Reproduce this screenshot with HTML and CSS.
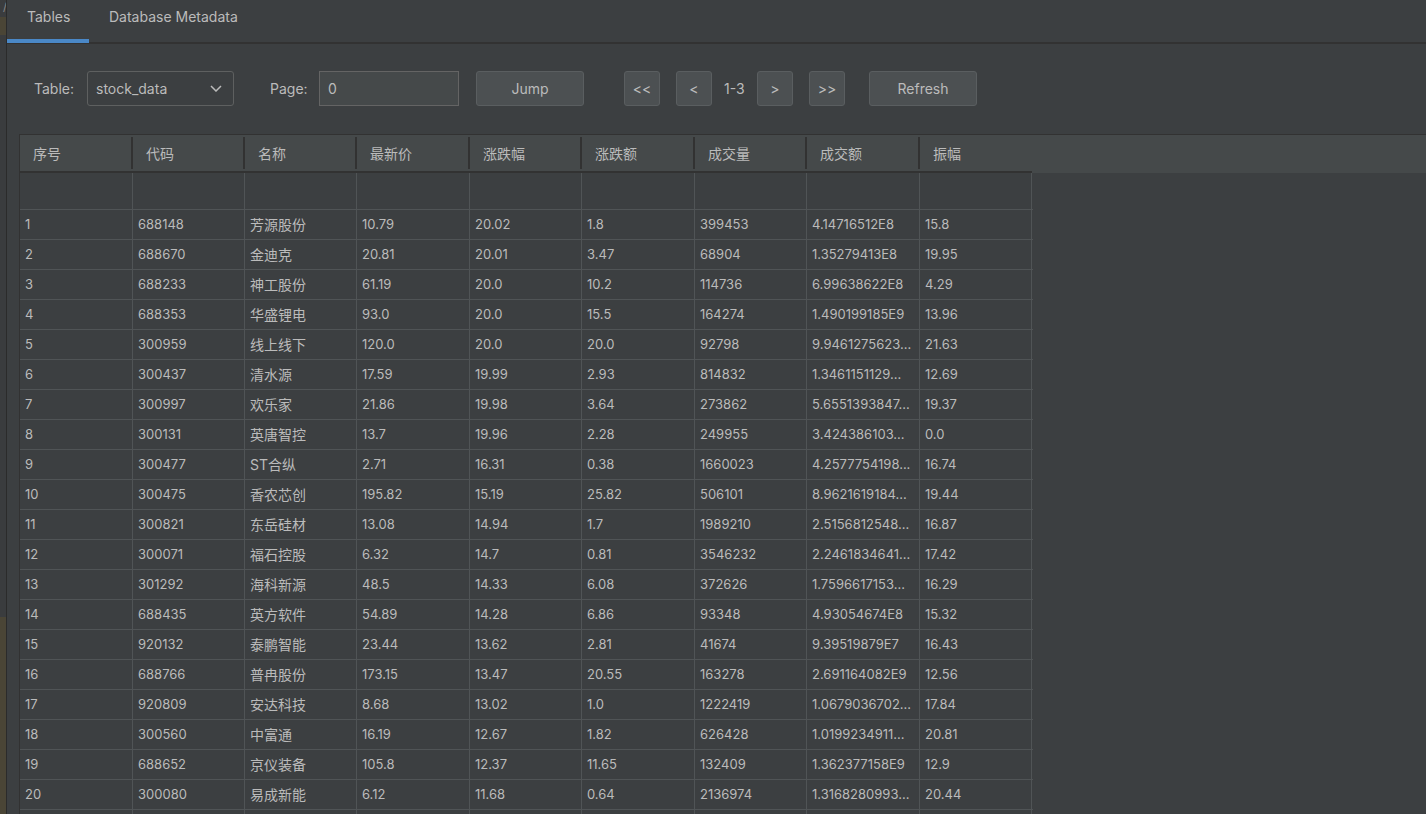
FILE: index.html
```html
<!DOCTYPE html>
<html lang="zh">
<head>
<meta charset="utf-8">
<title>Tables</title>
<link rel="stylesheet" href="styles.css">
</head>
<body>
<div class="gutter">
  <div class="g-top"><span class="g-slash">/</span></div>
  <div class="g-olive g-olive-a"></div>
  <div class="g-mid"></div>
  <div class="g-olive g-olive-b"></div>
</div>
<div class="divider"></div>
<div class="main">
  <div class="tabs">
    <div class="tab active">Tables</div>
    <div class="tab">Database Metadata</div>
  </div>
  <div class="toolbar">
    <span class="label label-table">Table:</span>
    <div class="combo">
      <span>stock_data</span>
      <svg class="chev" width="12" height="7" viewBox="0 0 12 7"><polyline points="1,1 6,6 11,1" fill="none" stroke="#bbbbbb" stroke-width="1.5"/></svg>
    </div>
    <span class="label label-page">Page:</span>
    <div class="input">0</div>
    <div class="btn btn-wide btn-jump">Jump</div>
    <div class="btn btn-sm btn-first">&lt;&lt;</div>
    <div class="btn btn-sm btn-prev">&lt;</div>
    <span class="pages">1-3</span>
    <div class="btn btn-sm btn-next">&gt;</div>
    <div class="btn btn-sm btn-last">&gt;&gt;</div>
    <div class="btn btn-wide btn-refresh">Refresh</div>
  </div>
  <div class="table-wrap">
    <div class="head">
      <div class="hrow">
        <div class="hc">序号</div><div class="hc">代码</div><div class="hc">名称</div><div class="hc">最新价</div><div class="hc">涨跌幅</div><div class="hc">涨跌额</div><div class="hc">成交量</div><div class="hc">成交额</div><div class="hc last">振幅</div>
      </div>
    </div>
    <div class="body" id="tbody">
      <div class="row empty"><div class="c"></div><div class="c"></div><div class="c"></div><div class="c"></div><div class="c"></div><div class="c"></div><div class="c"></div><div class="c"></div><div class="c"></div></div>
      <div class="row"><div class="c">1</div><div class="c">688148</div><div class="c cn">芳源股份</div><div class="c">10.79</div><div class="c">20.02</div><div class="c">1.8</div><div class="c">399453</div><div class="c">4.14716512E8</div><div class="c">15.8</div></div>
      <div class="row"><div class="c">2</div><div class="c">688670</div><div class="c cn">金迪克</div><div class="c">20.81</div><div class="c">20.01</div><div class="c">3.47</div><div class="c">68904</div><div class="c">1.35279413E8</div><div class="c">19.95</div></div>
      <div class="row"><div class="c">3</div><div class="c">688233</div><div class="c cn">神工股份</div><div class="c">61.19</div><div class="c">20.0</div><div class="c">10.2</div><div class="c">114736</div><div class="c">6.99638622E8</div><div class="c">4.29</div></div>
      <div class="row"><div class="c">4</div><div class="c">688353</div><div class="c cn">华盛锂电</div><div class="c">93.0</div><div class="c">20.0</div><div class="c">15.5</div><div class="c">164274</div><div class="c">1.490199185E9</div><div class="c">13.96</div></div>
      <div class="row"><div class="c">5</div><div class="c">300959</div><div class="c cn">线上线下</div><div class="c">120.0</div><div class="c">20.0</div><div class="c">20.0</div><div class="c">92798</div><div class="c">9.9461275623...</div><div class="c">21.63</div></div>
      <div class="row"><div class="c">6</div><div class="c">300437</div><div class="c cn">清水源</div><div class="c">17.59</div><div class="c">19.99</div><div class="c">2.93</div><div class="c">814832</div><div class="c">1.3461151129...</div><div class="c">12.69</div></div>
      <div class="row"><div class="c">7</div><div class="c">300997</div><div class="c cn">欢乐家</div><div class="c">21.86</div><div class="c">19.98</div><div class="c">3.64</div><div class="c">273862</div><div class="c">5.6551393847...</div><div class="c">19.37</div></div>
      <div class="row"><div class="c">8</div><div class="c">300131</div><div class="c cn">英唐智控</div><div class="c">13.7</div><div class="c">19.96</div><div class="c">2.28</div><div class="c">249955</div><div class="c">3.424386103...</div><div class="c">0.0</div></div>
      <div class="row"><div class="c">9</div><div class="c">300477</div><div class="c cn">ST合纵</div><div class="c">2.71</div><div class="c">16.31</div><div class="c">0.38</div><div class="c">1660023</div><div class="c">4.2577754198...</div><div class="c">16.74</div></div>
      <div class="row"><div class="c">10</div><div class="c">300475</div><div class="c cn">香农芯创</div><div class="c">195.82</div><div class="c">15.19</div><div class="c">25.82</div><div class="c">506101</div><div class="c">8.9621619184...</div><div class="c">19.44</div></div>
      <div class="row"><div class="c">11</div><div class="c">300821</div><div class="c cn">东岳硅材</div><div class="c">13.08</div><div class="c">14.94</div><div class="c">1.7</div><div class="c">1989210</div><div class="c">2.5156812548...</div><div class="c">16.87</div></div>
      <div class="row"><div class="c">12</div><div class="c">300071</div><div class="c cn">福石控股</div><div class="c">6.32</div><div class="c">14.7</div><div class="c">0.81</div><div class="c">3546232</div><div class="c">2.2461834641...</div><div class="c">17.42</div></div>
      <div class="row"><div class="c">13</div><div class="c">301292</div><div class="c cn">海科新源</div><div class="c">48.5</div><div class="c">14.33</div><div class="c">6.08</div><div class="c">372626</div><div class="c">1.7596617153...</div><div class="c">16.29</div></div>
      <div class="row"><div class="c">14</div><div class="c">688435</div><div class="c cn">英方软件</div><div class="c">54.89</div><div class="c">14.28</div><div class="c">6.86</div><div class="c">93348</div><div class="c">4.93054674E8</div><div class="c">15.32</div></div>
      <div class="row"><div class="c">15</div><div class="c">920132</div><div class="c cn">泰鹏智能</div><div class="c">23.44</div><div class="c">13.62</div><div class="c">2.81</div><div class="c">41674</div><div class="c">9.39519879E7</div><div class="c">16.43</div></div>
      <div class="row"><div class="c">16</div><div class="c">688766</div><div class="c cn">普冉股份</div><div class="c">173.15</div><div class="c">13.47</div><div class="c">20.55</div><div class="c">163278</div><div class="c">2.691164082E9</div><div class="c">12.56</div></div>
      <div class="row"><div class="c">17</div><div class="c">920809</div><div class="c cn">安达科技</div><div class="c">8.68</div><div class="c">13.02</div><div class="c">1.0</div><div class="c">1222419</div><div class="c">1.0679036702...</div><div class="c">17.84</div></div>
      <div class="row"><div class="c">18</div><div class="c">300560</div><div class="c cn">中富通</div><div class="c">16.19</div><div class="c">12.67</div><div class="c">1.82</div><div class="c">626428</div><div class="c">1.0199234911...</div><div class="c">20.81</div></div>
      <div class="row"><div class="c">19</div><div class="c">688652</div><div class="c cn">京仪装备</div><div class="c">105.8</div><div class="c">12.37</div><div class="c">11.65</div><div class="c">132409</div><div class="c">1.362377158E9</div><div class="c">12.9</div></div>
      <div class="row"><div class="c">20</div><div class="c">300080</div><div class="c cn">易成新能</div><div class="c">6.12</div><div class="c">11.68</div><div class="c">0.64</div><div class="c">2136974</div><div class="c">1.3168280993...</div><div class="c">20.44</div></div>
      <div class="row"><div class="c"></div><div class="c"></div><div class="c"></div><div class="c"></div><div class="c"></div><div class="c"></div><div class="c"></div><div class="c"></div><div class="c"></div></div>
    </div>
  </div>
</div>
</body>
</html>
```

FILE: styles.css
```css
* { box-sizing: border-box; }
html, body { margin: 0; padding: 0; }
body {
  width: 1426px;
  height: 814px;
  overflow: hidden;
  display: flex;
  background: #3c3f41;
  color: #bbbbbb;
  font-family: Inter, "Noto Sans", "Noto Sans CJK SC", sans-serif;
  font-size: 13px;
}

/* left gutter */
.gutter {
  width: 6px;
  display: flex;
  flex-direction: column;
  background: #3a3c3e;
}
.g-top { height: 17px; position: relative; overflow: hidden; }
.g-slash { position: absolute; right: -1px; top: 0; font-size: 11px; color: #8a8a8a; line-height: 14px; }
.g-olive { background: #4a4536; }
.g-olive-a { height: 18px; }
.g-mid { height: 582px; }
.g-olive-b { flex: 1; }
.divider { width: 1px; background: #2b2b2b; }

.main {
  flex: 1;
  min-width: 0;
  display: flex;
  flex-direction: column;
}

/* tabs */
.tabs {
  height: 44px;
  flex: none;
  display: flex;
  border-bottom: 2px solid #323232;
  font-size: 14px;
}
.tab {
  position: relative;
  padding: 9px 20px 0 20px;
  line-height: 16px;
  color: #bbbbbb;
}
.tab.active {
  width: 82px;
  padding-right: 0;
}
.tab.active::after {
  content: "";
  position: absolute;
  left: 0;
  right: 0;
  bottom: -1px;
  height: 4px;
  background: #4a88c7;
}

/* toolbar */
.toolbar {
  flex: none;
  display: flex;
  align-items: center;
  height: 35px;
  margin: 27px 0 28px 27px;
  font-size: 14px;
}
.label { line-height: 16px; flex: none; }
.label-table { width: 53px; }
.label-page { width: 49px; margin-left: 36px; }
.combo {
  width: 147px;
  height: 35px;
  border: 1px solid #5e6060;
  border-radius: 3px;
  display: flex;
  align-items: center;
  justify-content: space-between;
  padding: 0 11px 0 8px;
}
.chev { display: block; }
.input {
  width: 140px;
  height: 35px;
  background: #45494a;
  border: 1px solid #646464;
  display: flex;
  align-items: center;
  padding-left: 8px;
}
.btn {
  height: 35px;
  background: #4c5052;
  border: 1px solid #5a5e60;
  border-radius: 3px;
  display: flex;
  align-items: center;
  justify-content: center;
  flex: none;
}
.btn-wide { width: 108px; }
.btn-sm { width: 36px; }
.btn-jump { margin-left: 17px; }
.btn-first { margin-left: 40px; }
.btn-prev { margin-left: 16px; }
.pages { width: 45px; padding-left: 12px; flex: none; }
.btn-last { margin-left: 16px; }
.btn-refresh { margin-left: 24px; }

/* table */
.table-wrap {
  flex: 1;
  margin-left: 12px;
  border-top: 1px solid #323232;
  border-left: 1px solid #323232;
  overflow: hidden;
}
.head {
  height: 38px;
  background: #45494a;
}
.hrow {
  display: grid;
  grid-template-columns: 113px 112px 112px 113px 112px 113px 112px 113px 112px;
  width: 1012px;
  height: 38px;
  border-bottom: 2px solid #323232;
}
.hc {
  position: relative;
  padding-left: 13px;
  font-size: 14px;
  line-height: 37px;
  white-space: nowrap;
  overflow: hidden;
}
.hc::after {
  content: "";
  position: absolute;
  right: 0;
  top: 2px;
  bottom: 2px;
  width: 2px;
  background: #323232;
}
.hc.last::after { display: none; }

.body { width: 1013px; }
.row {
  display: grid;
  grid-template-columns: 113px 112px 112px 113px 112px 113px 112px 113px 112px;
  height: 30px;
  border-bottom: 1px solid #505456;
}
.row.empty { height: 37px; }
.c {
  border-right: 1px solid #505456;
  padding-left: 5px;
  line-height: 29px;
  white-space: nowrap;
  overflow: hidden;
}
.cn { font-size: 14px; }
```
